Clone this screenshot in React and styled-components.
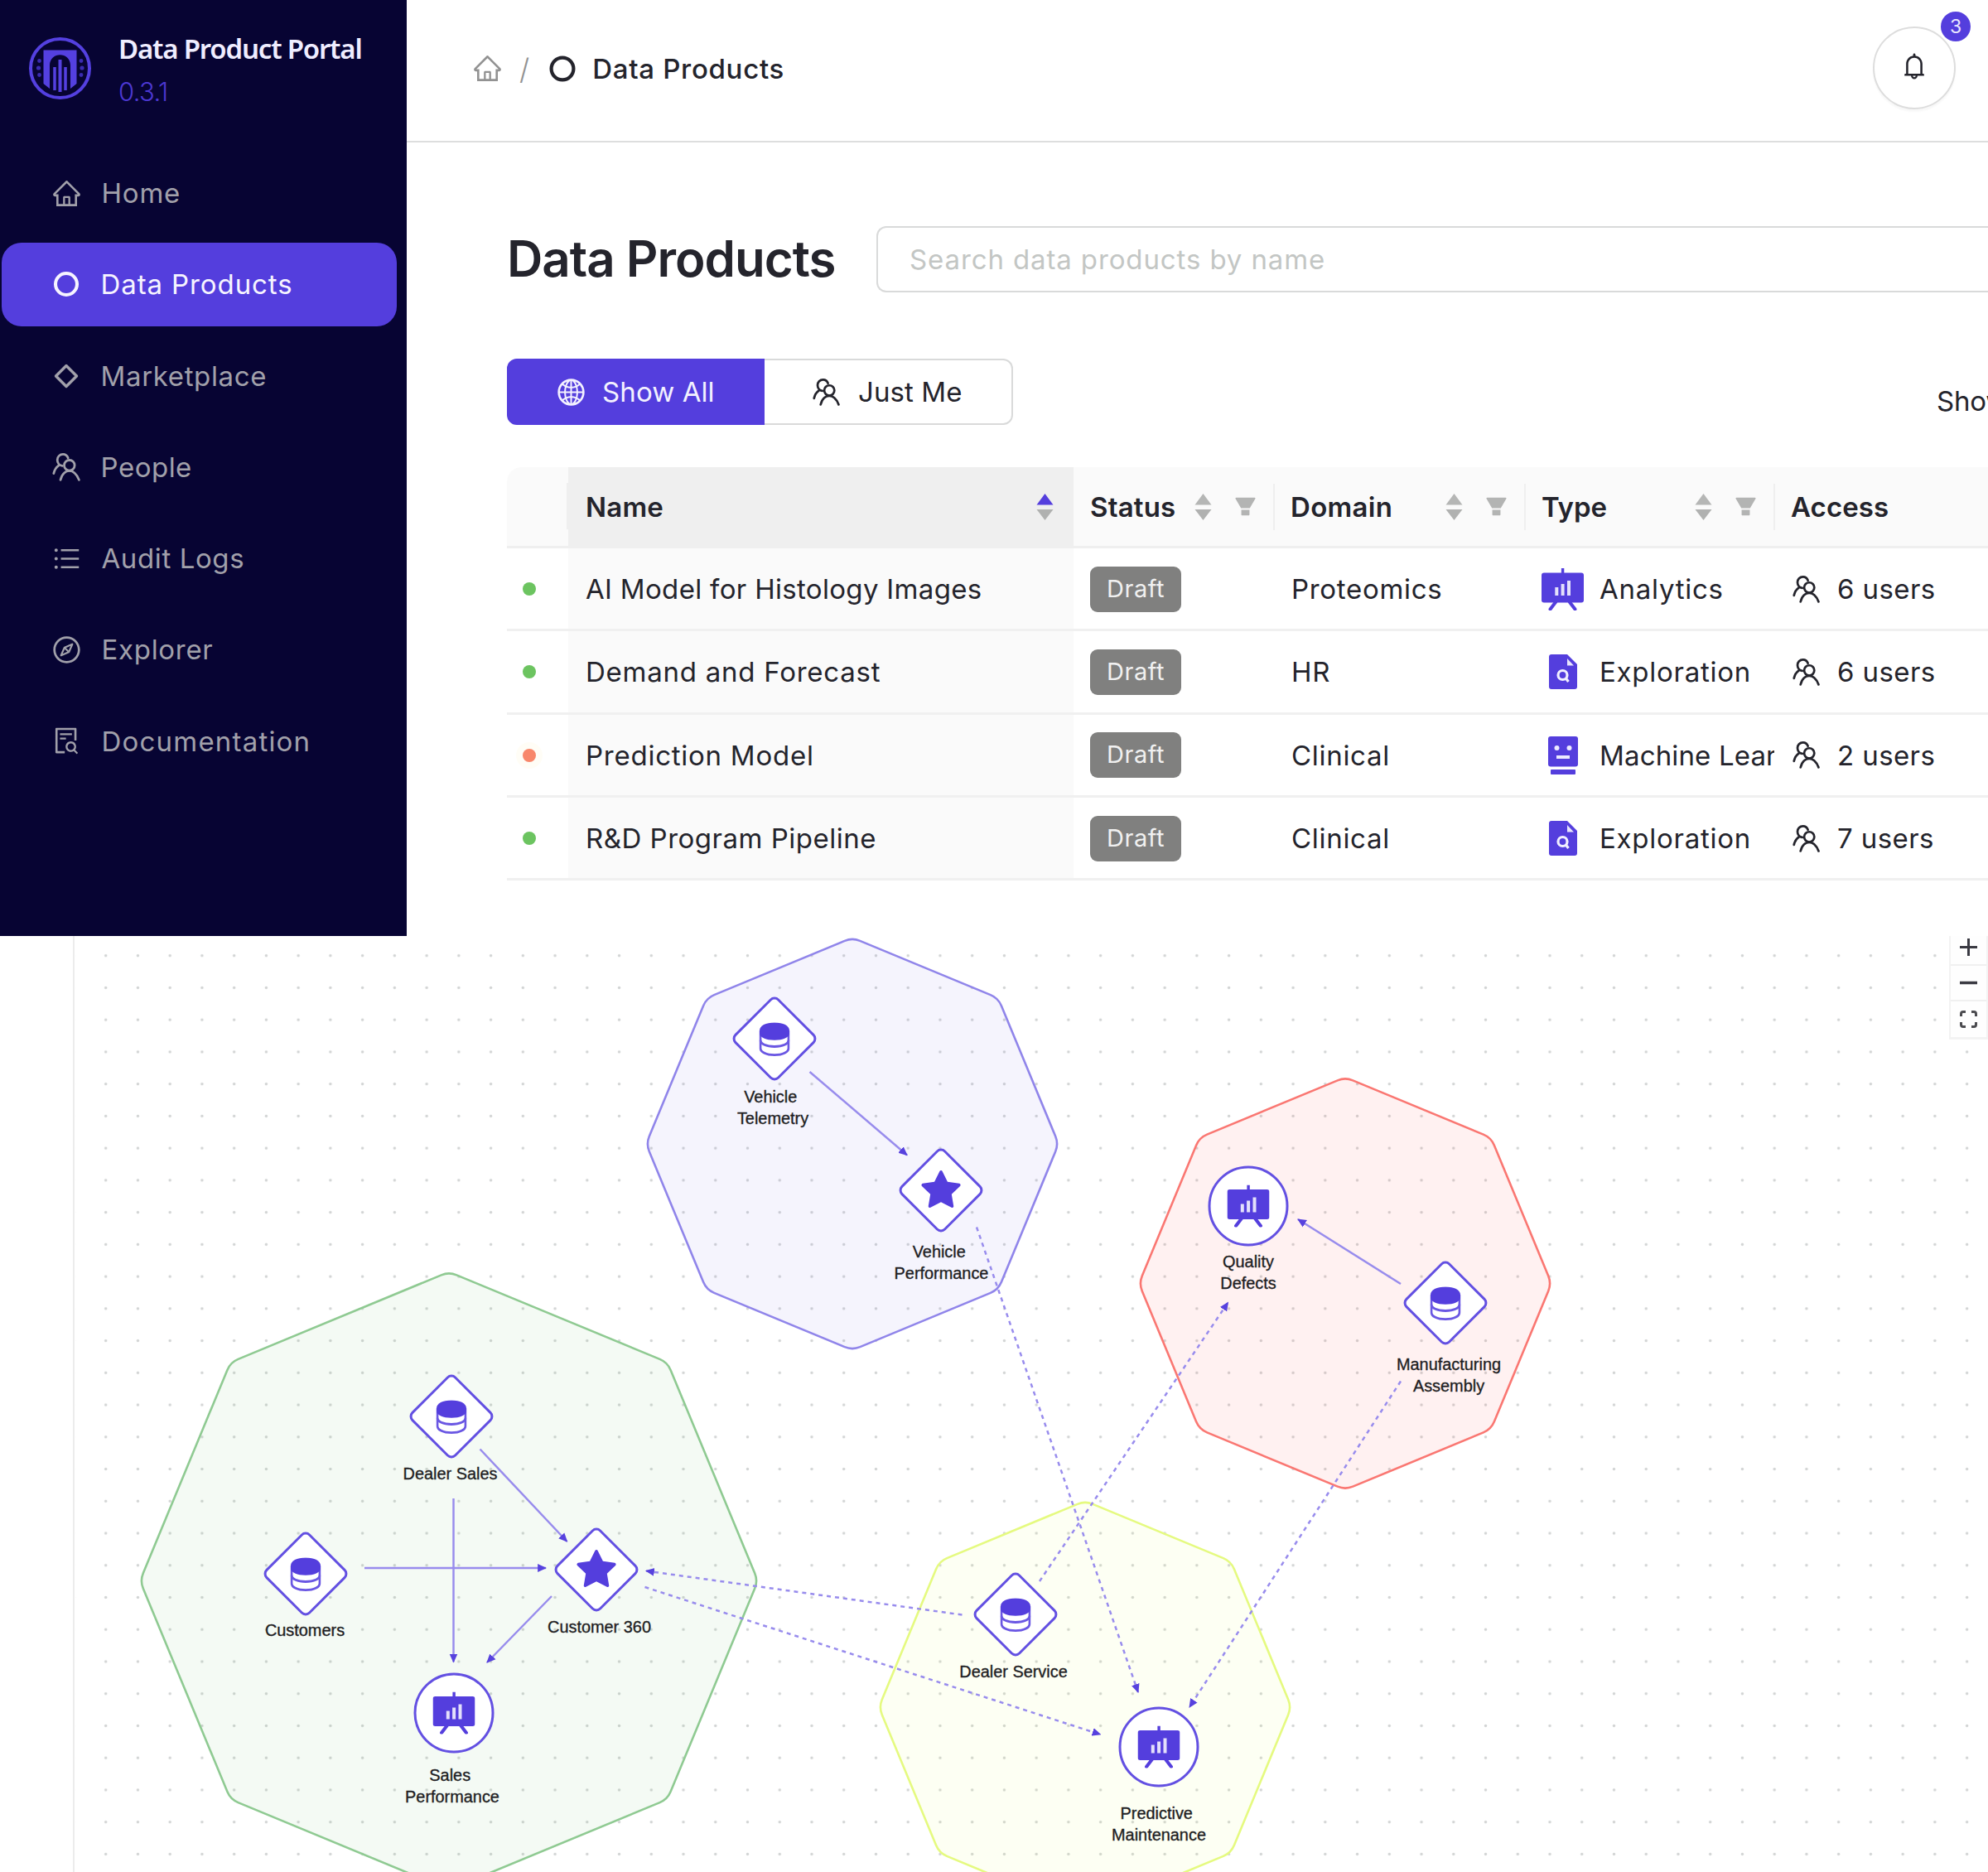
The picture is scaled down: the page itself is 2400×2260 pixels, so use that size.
import React from 'react'
import styled, { createGlobalStyle } from 'styled-components'
import {
  AiOutlineHome,
  AiOutlineUnorderedList,
  AiOutlineCompass,
  AiOutlineFileSearch,
  AiOutlineGlobal,
  AiOutlineBell,
  AiFillFilter,
  AiFillStar,
} from 'react-icons/ai'

const purple = '#543edd'
const ink = '#24242c'

const GlobalStyle = createGlobalStyle`
  * { box-sizing: border-box; }
  body {
    margin: 0;
    background: #fff;
    color: ${ink};
    font-family: Inter, 'Open Sans', sans-serif;
    overflow: hidden;
  }
  svg { display: block; flex: none; }
`

const Page = styled.div`
  width: 2400px;
  height: 2260px;
  overflow: hidden;
`

const Portal = styled.div`
  display: flex;
  height: 1130px;
`

/* sidebar */

const Sidebar = styled.aside`
  width: 491px;
  flex: none;
  background: #070433;
`

const Brand = styled.div`
  display: flex;
  gap: 33px;
  height: 183px;
  padding: 37px 0 0 35px;
`

const Logo = styled.svg`
  margin-top: 8px;
`

const BrandName = styled.div`
  font-family: 'Noto Sans', sans-serif;
  font-size: 33px;
  font-weight: 600;
  line-height: 44px;
  letter-spacing: -1.2px;
  color: #efedff;
  white-space: nowrap;
`

const Version = styled.div`
  margin-top: 12px;
  font-size: 31px;
  font-weight: 300;
  line-height: 36px;
  letter-spacing: -0.6px;
  color: #4c38d2;
`

const Nav = styled.nav`
  display: flex;
  flex-direction: column;
  gap: 9.3px;
  padding: 0 12px 0 2px;
`

const NavItem = styled.a`
  display: flex;
  align-items: center;
  gap: 24px;
  height: 101px;
  padding: 0 0 1px 59.5px;
  border-radius: 24px;
  font-size: 33px;
  letter-spacing: ${props => props.spacing};
  background: ${props => props.active ? purple : 'transparent'};
  color: ${props => props.active ? '#f6f4ff' : '#a1a0aa'};
`

/* main column */

const Main = styled.main`
  flex: 1;
  min-width: 0;
  overflow: hidden;
`

const TopBar = styled.header`
  display: flex;
  align-items: center;
  justify-content: space-between;
  height: 172px;
  padding: 0 39px 7px 79px;
  border-bottom: 2px solid #dddede;
`

const Crumbs = styled.div`
  display: flex;
  align-items: center;
  padding-top: 2px;
  color: #929292;
`

const Slash = styled.span`
  margin: 0 24px 0 20px;
  font-size: 35px;
  font-weight: 300;
  line-height: 36px;
`

const CrumbCurrent = styled.span`
  display: flex;
  align-items: center;
  gap: 20px;
  font-size: 33px;
  font-weight: 500;
  letter-spacing: 0.7px;
  color: ${ink};
`

const BellButton = styled.div`
  position: relative;
  display: flex;
  align-items: center;
  justify-content: center;
  width: 100px;
  height: 100px;
  padding-bottom: 3px;
  border: 2px solid #dddddd;
  border-radius: 50%;
  box-shadow: 0 3px 2px rgba(0, 0, 0, 0.03);
`

const Badge = styled.span`
  position: absolute;
  top: -20px;
  right: -20px;
  width: 36px;
  height: 36px;
  border-radius: 50%;
  background: ${purple};
  color: #e9e6ff;
  font-size: 23px;
  line-height: 36px;
  text-align: center;
`

const Content = styled.div`
  padding: 101px 0 0 121px;
`

const TitleRow = styled.div`
  display: flex;
  align-items: center;
  height: 80px;
`

const Title = styled.h1`
  width: 446px;
  margin: 0;
  padding-bottom: 3px;
  flex: none;
  font-size: 60px;
  font-weight: 600;
  letter-spacing: -1px;
  white-space: nowrap;
`

const Search = styled.input`
  flex: 1;
  height: 80px;
  padding: 0 38px;
  border: 2px solid #d9dada;
  border-right: 0;
  border-radius: 12px 0 0 12px;
  font: 33px Inter, sans-serif;
  letter-spacing: 0.88px;
  outline: 0;
  &::placeholder { color: #c3c6c4; opacity: 1; }
`

const FilterRow = styled.div`
  display: flex;
  align-items: center;
  justify-content: space-between;
  height: 80px;
  margin-top: 80px;
`

const Toggle = styled.div`
  display: flex;
`

const ToggleOption = styled.button`
  display: flex;
  align-items: center;
  gap: ${props => props.active ? '19px' : '21px'};
  width: ${props => props.active ? '311px' : '300px'};
  height: 80px;
  padding: 0 0 0 57px;
  border: 2px solid ${props => props.active ? purple : '#d9dada'};
  border-width: ${props => props.active ? '2px' : '2px 2px 2px 0'};
  border-radius: ${props => props.active ? '12px 0 0 12px' : '0 12px 12px 0'};
  background: ${props => props.active ? purple : '#fff'};
  color: ${props => props.active ? '#f3f1ff' : ink};
  font: 33px Inter, sans-serif;
  letter-spacing: 0.1px;
  white-space: nowrap;
`

const Showing = styled.span`
  width: 62px;
  margin-top: 21px;
  overflow: hidden;
  font-size: 33px;
  letter-spacing: -0.2px;
  white-space: nowrap;
`

/* table */

const Table = styled.div`
  margin-top: 51px;
`

const Row = styled.div`
  display: grid;
  grid-template-columns: 74px 610px 242px 303px 301px 404px;
  height: ${props => props.head ? '98px' : '100.3px'};
  font-size: 33px;
`

const HeadCell = styled.div`
  display: flex;
  align-items: center;
  padding: ${props => props.first ? '0 0 2px' : props.wide ? '0 24px 0 21px' : '0 17px 0 20px'};
  border-bottom: 3px solid #efefef;
  border-top-left-radius: ${props => props.first ? '18px' : 0};
  background: ${props => props.sorted ? '#efefef' : '#fafafa'};
  font-weight: 600;
  letter-spacing: ${props => props.spacing || '0.1px'};
`

const HeadTools = styled.div`
  display: flex;
  align-items: center;
  gap: 25px;
  margin-left: auto;
`

const Divider = styled.i`
  position: relative;
  width: 2px;
  height: 56px;
  margin: ${props => props.edge ? '0' : '0 -18px 0 -7px'};
  background: #efefef;
`

const Cell = styled.div`
  display: flex;
  align-items: center;
  gap: ${props => props.gap || '0'};
  padding: 1px 0 0 ${props => props.pad || '21px'};
  overflow: hidden;
  border-bottom: 3px solid #f0f0f0;
  background: ${props => props.sorted ? '#fafafa' : '#fff'};
  letter-spacing: ${props => props.spacing || '0.7px'};
  white-space: nowrap;
`

const Dot = styled.i`
  width: 16px;
  height: 16px;
  margin-left: -1px;
  border-radius: 50%;
  background: ${props => props.color};
  box-shadow: ${props => props.glow ? '0 0 0 8px #fffdf6' : 'none'};
`

const Tag = styled.span`
  width: 110px;
  height: 55px;
  margin-left: -1px;
  border-radius: 9px;
  background: #80807f;
  color: #f0f0f0;
  font-size: 29px;
  line-height: 54px;
  letter-spacing: 0.5px;
  text-align: center;
`

const IconBox = styled.span`
  display: flex;
  flex: none;
  justify-content: center;
  width: 51px;
  margin-left: -1px;
`

/* explorer canvas */

const Explorer = styled.div`
  height: 1130px;
  padding-left: 88px;
`

const Canvas = styled.div`
  position: relative;
  height: 1130px;
  overflow: hidden;
  border-left: 2px solid #ececec;
`

const Drawing = styled.svg`
  position: absolute;
  top: 0;
  left: -90px;
`

const NodeShape = styled.div`
  position: absolute;
  left: ${props => props.x - 90}px;
  top: ${props => props.y - 1130}px;
  display: flex;
  align-items: center;
  justify-content: center;
  width: ${props => props.round ? 97 : 76}px;
  height: ${props => props.round ? 97 : 76}px;
  border: 3.5px solid #6350e2;
  border-radius: ${props => props.round ? '50%' : '8px'};
  background: #fff;
  transform: translate(-50%, -50%) rotate(${props => props.round ? 0 : 45}deg);
  svg { transform: rotate(${props => props.round ? 0 : -45}deg); }
`

const NodeLabel = styled.div`
  position: absolute;
  left: ${props => props.x - 90}px;
  top: ${props => props.y - 1130 - 13.5}px;
  transform: translateX(-50%);
  font-family: 'Liberation Sans', Arial, sans-serif;
  font-size: 19.9px;
  line-height: 26.4px;
  -webkit-text-stroke: 0.35px #2a2a2e;
  text-align: center;
  white-space: pre;
  color: #1c1c20;
`

const Controls = styled.div`
  position: absolute;
  top: 0;
  right: 0;
  width: 47px;
  border: solid #f3f3f3;
  border-width: 0 2px 3px;
`

const ControlButton = styled.div`
  display: flex;
  align-items: center;
  justify-content: center;
  height: ${props => props.h}px;
  padding-bottom: ${props => props.lift || 0}px;
  border-top: ${props => props.line ? '2px solid #f0f0f0' : 0};
  background: #fefefe;
`

/* icons */

const RingIcon = ({ size = 32 }) =>
  <svg width={size} height={size} viewBox="0 0 32 32" fill="none" stroke="currentColor" strokeWidth="4.2">
    <circle cx="16" cy="16" r="13.4" />
  </svg>

const DiamondIcon = () =>
  <svg width="36" height="36" viewBox="0 0 36 36" fill="none" stroke="currentColor" strokeWidth="3.4" strokeLinejoin="round">
    <path d="M18 5.5 30.5 18 18 30.5 5.5 18Z" />
  </svg>

const PeopleIcon = ({ size = 36 }) =>
  <svg width={size} height={size} viewBox="0 0 36 36" fill="none" stroke="currentColor" strokeWidth="2.8" strokeLinecap="round" strokeLinejoin="round">
    <circle cx="21.8" cy="15.8" r="6.3" />
    <path d="M11 33.4C12 29.5 13 27.2 15.5 25 19 21.6 24.5 21.6 28 25 30.5 27.2 32 29.5 33.4 33.4" />
    <path d="M20.2 7C19.2 4.2 16.8 2.4 14 2.4 10.2 2.4 7.2 5.4 7.2 9.2c0 3.6 2.4 6.6 6 7.2" />
    <path d="M9 15.8C5.8 18 3.8 21 2.8 25.6" />
  </svg>

const EaselIcon = () =>
  <svg width="51" height="51" viewBox="0 0 51 51">
    <rect x="23.9" width="3.4" height="8" fill={purple} />
    <rect y="5.5" width="51" height="36" rx="3" fill={purple} />
    <path d="M17 41 10.5 49.5M34 41 40.5 49.5" stroke={purple} strokeWidth="4" strokeLinecap="round" />
    <path d="M18.3 23V33M25.6 19V33M33 15V33" stroke="#e4e0fb" strokeWidth="4" />
  </svg>

const ExploreIcon = () =>
  <svg width="34" height="42" viewBox="0 0 34 42">
    <path d="M3 0H22L34 12V39a3 3 0 0 1-3 3H3a3 3 0 0 1-3-3V3a3 3 0 0 1 3-3Z" fill={purple} />
    <path d="M22 5V13.5H30Z" fill="#e8e5fc" />
    <circle cx="16.5" cy="25" r="5.5" fill="none" stroke="#f1efff" strokeWidth="3.2" />
    <path d="M20 28.5 23.5 33" stroke="#f1efff" strokeWidth="3.2" />
  </svg>

const RobotIcon = () =>
  <svg width="36" height="46" viewBox="0 0 36 46">
    <rect width="36" height="36.5" rx="3" fill={purple} />
    <rect x="3" y="40" width="30" height="6" rx="1" fill={purple} />
    <circle cx="10.5" cy="14" r="3" fill="#eceaff" />
    <circle cx="25.5" cy="14" r="3" fill="#eceaff" />
    <rect x="10" y="23" width="16" height="4" fill="#eceaff" />
  </svg>

const DatabaseIcon = () =>
  <svg width="37" height="41" viewBox="0 0 37 41" fill="none" stroke="#6a57e3" strokeWidth="2.8">
    <path d="M1.5 10V31C1.5 36 8.5 39.5 18.5 39.5S35.5 36 35.5 31V10" fill="#fff" />
    <path d="M1.5 21.5C1.5 26 8.5 29.3 18.5 29.3S35.5 26 35.5 21.5" />
    <path d="M0.5 10C0.5 4 8 0.3 18.5 0.3S36.5 4 36.5 10V13.5C36.5 18 28.5 21.5 18.5 21.5S0.5 18 0.5 13.5Z" fill={purple} stroke="none" />
  </svg>

const Sorter = ({ up }) =>
  <svg width="21" height="34" viewBox="0 0 21 34">
    <path d="M10.5 1 20.5 14.5H0.5Z" fill={up ? purple : '#b5b6b5'} />
    <path d="M10.5 33 20.5 20H0.5Z" fill="#b0b1b0" />
  </svg>

const RingSlot = () =>
  <svg width="36" height="36" viewBox="-2.5 -2.5 36 36"><RingIcon size={31} /></svg>

const nav = [
  { label: 'Home', icon: <AiOutlineHome size={37} />, spacing: '0.8px' },
  { label: 'Data Products', icon: <RingSlot />, active: true, spacing: '0.9px' },
  { label: 'Marketplace', icon: <DiamondIcon />, spacing: '0.65px' },
  { label: 'People', icon: <PeopleIcon />, spacing: '0.5px' },
  { label: 'Audit Logs', icon: <AiOutlineUnorderedList size={37} />, spacing: '0.6px' },
  { label: 'Explorer', icon: <AiOutlineCompass size={37} />, spacing: '0.7px' },
  { label: 'Documentation', icon: <AiOutlineFileSearch size={37} />, spacing: '1.2px' },
]

const typeIcons = {
  Analytics: <EaselIcon />,
  Exploration: <ExploreIcon />,
  'Machine Learning': <RobotIcon />,
}

const products = [
  { name: 'AI Model for Histology Images', domain: 'Proteomics', type: 'Analytics', users: 6, spacing: '0.32px' },
  { name: 'Demand and Forecast', domain: 'HR', type: 'Exploration', users: 6, spacing: '0.75px' },
  { name: 'Prediction Model', domain: 'Clinical', type: 'Machine Learning', users: 2, warn: true, spacing: '0.75px', tight: true },
  { name: 'R&D Program Pipeline', domain: 'Clinical', type: 'Exploration', users: 7, spacing: '0.5px' },
]

const domains = [
  { x: 542, y: 1908.5, r: 373, stroke: '#8fca92', fill: 'rgba(60, 170, 70, 0.06)' },
  { x: 1029, y: 1381, r: 249, stroke: '#9085ea', fill: 'rgba(84, 62, 223, 0.06)' },
  { x: 1624, y: 1549.5, r: 249, stroke: '#fa7772', fill: 'rgba(250, 50, 40, 0.065)' },
  { x: 1310, y: 2061, r: 249, stroke: '#e5fa80', fill: 'rgba(215, 250, 50, 0.06)' },
]

const nodes = [
  { x: 935, y: 1254, icon: 'db', label: 'Vehicle \nTelemetry', lx: 933, ly: 1324 },
  { x: 1136, y: 1437, icon: 'star', label: 'Vehicle \nPerformance', lx: 1136.5, ly: 1511 },
  { x: 1507, y: 1456, icon: 'easel', label: 'Quality\nDefects', lx: 1507, ly: 1523 },
  { x: 1745, y: 1573, icon: 'db', label: 'Manufacturing\nAssembly', lx: 1749, ly: 1647 },
  { x: 545, y: 1710, icon: 'db', label: 'Dealer Sales', lx: 543.5, ly: 1779.5 },
  { x: 369, y: 1899.5, icon: 'db', label: 'Customers', lx: 368, ly: 1968.5 },
  { x: 719.5, y: 1894.5, icon: 'star', label: 'Customer 360', lx: 723.5, ly: 1964 },
  { x: 548, y: 2068, icon: 'easel', label: 'Sales \nPerformance', lx: 546, ly: 2143 },
  { x: 1225.5, y: 1949, icon: 'db', label: 'Dealer Service', lx: 1223.5, ly: 2018.5 },
  { x: 1399, y: 2109, icon: 'easel', label: 'Predictive \nMaintenance', lx: 1399, ly: 2189.5 },
]

const nodeIcons = {
  db: <DatabaseIcon />,
  star: <AiFillStar size={57} color={purple} />,
  easel: <EaselIcon />,
}

// [x1, y1, x2, y2, dashed]
const edges = [
  [977.5, 1294, 1095, 1394.5],
  [1691, 1550, 1567, 1472],
  [579.5, 1749.5, 684.5, 1861],
  [547.5, 1809, 547.5, 2006.5],
  [440, 1893, 659, 1893],
  [666, 1927, 588, 2007],
  [1179, 1481.5, 1374, 2043, true],
  [1255, 1909, 1482.5, 1572.5, true],
  [1691, 1667.5, 1436, 2061, true],
  [1161.5, 1949.5, 780, 1896.5, true],
  [778.5, 1916, 1328.5, 2094, true],
]

const octagon = ({ x, y, r }) => {
  const pts = [...Array(8)].map((_, i) => [
    x + r * Math.sin(i * Math.PI / 4),
    y - r * Math.cos(i * Math.PI / 4),
  ])
  const mix = (a, b) => {
    const t = 10 / Math.hypot(b[0] - a[0], b[1] - a[1])
    return `${a[0] + (b[0] - a[0]) * t} ${a[1] + (b[1] - a[1]) * t}`
  }
  return pts.map((p, i) => {
    const prev = pts[(i + 7) % 8]
    const next = pts[(i + 1) % 8]
    return `${i ? 'L' : 'M'}${mix(p, prev)}Q${p.join(' ')} ${mix(p, next)}`
  }).join('') + 'Z'
}

const Head = ({ title, spacing }) =>
  <HeadCell spacing={spacing}>
    {title}
    <HeadTools>
      <Sorter />
      <AiFillFilter size={31} color="#b3b4b3" />
      <Divider />
    </HeadTools>
  </HeadCell>

const ProductTable = () =>
  <Table>
    <Row head>
      <HeadCell first><HeadTools><Divider edge /></HeadTools></HeadCell>
      <HeadCell sorted wide spacing="0.2px">Name<HeadTools><Sorter up /></HeadTools></HeadCell>
      <Head title="Status" spacing="0.2px" />
      <Head title="Domain" spacing="0.3px" />
      <Head title="Type" spacing="-0.1px" />
      <HeadCell>Access</HeadCell>
    </Row>
    {products.map(p =>
      <Row key={p.name}>
        <Cell pad="20px"><Dot color={p.warn ? '#f8876b' : '#6cc460'} glow={p.warn} /></Cell>
        <Cell sorted spacing={p.spacing}>{p.name}</Cell>
        <Cell><Tag>Draft</Tag></Cell>
        <Cell>{p.domain}</Cell>
        <Cell gap="19px" spacing={p.tight ? '0.15px' : '0.75px'}><IconBox>{typeIcons[p.type]}</IconBox>{p.type}</Cell>
        <Cell gap="20px" spacing="0.4px"><PeopleIcon size={35} />{p.users} users</Cell>
      </Row>
    )}
  </Table>

const ExplorerCanvas = () =>
  <Explorer>
    <Canvas>
      <Drawing width="2400" height="1130" viewBox="0 1130 2400 1130">
        <defs>
          <pattern id="dots" x="108.33" y="1134.33" width="38.74" height="38.74" patternUnits="userSpaceOnUse">
            <circle cx="19.37" cy="19.37" r="1.7" fill="#d2d4d4" />
          </pattern>
          <marker id="arrow" viewBox="0 0 10 10" refX="9" refY="5" markerWidth="11" markerHeight="11" markerUnits="userSpaceOnUse" orient="auto">
            <path d="M0 0.5 10 5 0 9.5Z" fill="#5742de" />
          </marker>
        </defs>
        <rect x="91" y="1130" width="2309" height="1130" fill="url(#dots)" />
        {domains.map(d =>
          <path key={d.stroke} d={octagon(d)} fill={d.fill} stroke={d.stroke} strokeWidth="2.6" />
        )}
        {edges.map(([x1, y1, x2, y2, dashed]) =>
          <line
            key={`${x1}-${y1}`}
            x1={x1} y1={y1} x2={x2} y2={y2}
            stroke="#988ced"
            strokeWidth="2.5"
            strokeDasharray={dashed ? '5 5' : undefined}
            markerEnd="url(#arrow)"
          />
        )}
      </Drawing>
      {nodes.map(n =>
        <React.Fragment key={n.label + n.x}>
          <NodeShape x={n.x} y={n.y} round={n.icon === 'easel'}>{nodeIcons[n.icon]}</NodeShape>
          <NodeLabel x={n.lx} y={n.ly}>{n.label}</NodeLabel>
        </React.Fragment>
      )}
      <Controls>
        <ControlButton h={34} lift={8}>
          <svg width="21" height="21" viewBox="0 0 21 21" stroke="#3a3a42" strokeWidth="3"><path d="M0 10.5H21M10.5 0V21" /></svg>
        </ControlButton>
        <ControlButton h={43} line>
          <svg width="21" height="5" viewBox="0 0 21 5" stroke="#3a3a42" strokeWidth="3.5"><path d="M0 2.5H21" /></svg>
        </ControlButton>
        <ControlButton h={45} line>
          <svg width="21" height="21" viewBox="0 0 21 21" fill="none" stroke="#4c4c50" strokeWidth="3">
            <path d="M1.5 7V4Q1.5 1.5 4 1.5H7M14 1.5H17Q19.5 1.5 19.5 4V7M19.5 14V17Q19.5 19.5 17 19.5H14M7 19.5H4Q1.5 19.5 1.5 17V14" />
          </svg>
        </ControlButton>
      </Controls>
    </Canvas>
  </Explorer>

const App = () =>
  <Page>
    <GlobalStyle />
    <Portal>
      <Sidebar>
        <Brand>
          <Logo width="75" height="75" viewBox="0 0 75 75" fill="none" stroke="#5440e0">
            <circle cx="37.5" cy="37.5" r="35.5" strokeWidth="4" />
            <path d="M17.5 15.5H57.5V56L50 62V34C50 17 25 17 25 34V62L17.5 56Z" fill="#5440e0" stroke="none" />
            <path d="M31 36V64M44 36V64" strokeWidth="3.5" />
            <path d="M37.5 27V66" strokeWidth="4" />
            <g fill="#3a2bb0" stroke="none">
              <circle cx="12.5" cy="28.5" r="2.4" /><circle cx="11.5" cy="37" r="2.6" /><circle cx="12.5" cy="45.5" r="2.4" />
              <circle cx="63" cy="28.5" r="2.4" /><circle cx="64" cy="37" r="2.6" /><circle cx="63" cy="45.5" r="2.4" />
            </g>
          </Logo>
          <div>
            <BrandName>Data Product Portal</BrandName>
            <Version>0.3.1</Version>
          </div>
        </Brand>
        <Nav>
          {nav.map(item =>
            <NavItem key={item.label} active={item.active} spacing={item.spacing}>{item.icon}{item.label}</NavItem>
          )}
        </Nav>
      </Sidebar>
      <Main>
        <TopBar>
          <Crumbs>
            <AiOutlineHome size={37} />
            <Slash>/</Slash>
            <CrumbCurrent><RingIcon />Data Products</CrumbCurrent>
          </Crumbs>
          <BellButton>
            <AiOutlineBell size={36} />
            <Badge>3</Badge>
          </BellButton>
        </TopBar>
        <Content>
          <TitleRow>
            <Title>Data Products</Title>
            <Search placeholder="Search data products by name" />
          </TitleRow>
          <FilterRow>
            <Toggle>
              <ToggleOption active><AiOutlineGlobal size={37} />Show All</ToggleOption>
              <ToggleOption><PeopleIcon size={35} />Just Me</ToggleOption>
            </Toggle>
            <Showing>Showing</Showing>
          </FilterRow>
          <ProductTable />
        </Content>
      </Main>
    </Portal>
    <ExplorerCanvas />
  </Page>

export default App
